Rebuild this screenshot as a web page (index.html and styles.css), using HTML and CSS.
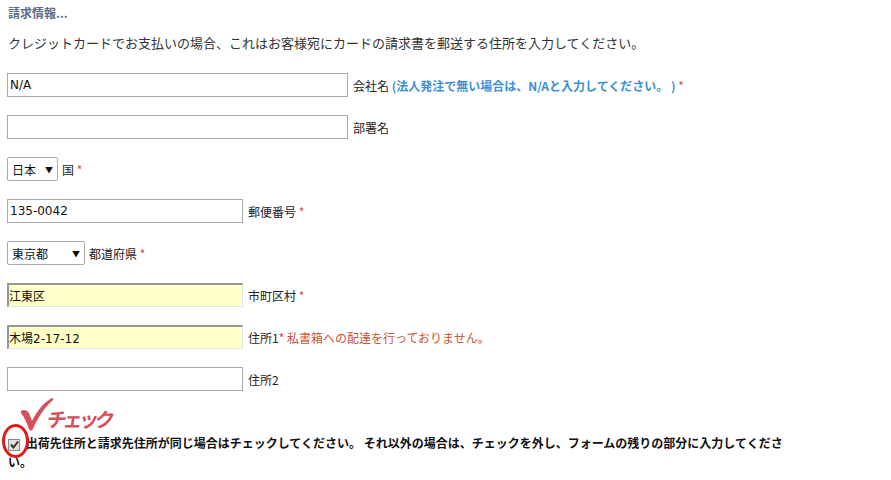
FILE: index.html
```html
<!DOCTYPE html>
<html>

<head>
    <meta charset="utf-8">
    <title>請求情報</title>
    <link rel="stylesheet" href="styles.css">
</head>

<body>

    <div class="page">
        <div class="heading">請求情報...</div>
        <p class="intro">クレジットカードでお支払いの場合、これはお客様宛にカードの請求書を郵送する住所を入力してください。</p>

        <div class="row">
            <input class="text wide" type="text" value="N/A">
            <span class="label">会社名 <span class="note">(法人発注で無い場合は、N/Aと入力してください。 )</span> <span class="req">*</span></span>
        </div>
        <div class="row">
            <input class="text wide" type="text" value="">
            <span class="label">部署名</span>
        </div>
        <div class="row">
            <span class="select country">日本<span class="arrow">▼</span></span>
            <span class="label">国 <span class="req">*</span></span>
        </div>
        <div class="row">
            <input class="text" type="text" value="135-0042">
            <span class="label">郵便番号 <span class="req">*</span></span>
        </div>
        <div class="row">
            <span class="select pref">東京都<span class="arrow">▼</span></span>
            <span class="label">都道府県 <span class="req">*</span></span>
        </div>
        <div class="row">
            <input class="text filled" type="text" value="江東区">
            <span class="label">市町区村 <span class="req">*</span></span>
        </div>
        <div class="row">
            <input class="text filled" type="text" value="木場2-17-12">
            <span class="label">住所1<span class="req">*</span> <span class="warn">私書箱への配達を行っておりません。</span></span>
        </div>
        <div class="row">
            <input class="text" type="text" value="">
            <span class="label">住所2</span>
        </div>

        <div class="mark">
            <svg class="tick" width="36" height="34" viewBox="0 0 36 34">
                <path d="M2 14 C5 12 8 13 10 16 L13 24 C18 14 24 6 33 1 C34 1 35 2 34 3 C26 10 19 20 14 32 C13 34 11 34 10 32 C8 26 5 20 2 16 Z" fill="#d4505a"/>
            </svg>
            <span class="mark-text">チェック</span>
        </div>

        <p class="same">
            <span class="checkbox">
                <svg width="9" height="9" viewBox="0 0 9 9">
                    <path d="M1 4.5 L3.5 7.5 L8 1.5" fill="none" stroke="#333" stroke-width="2"/>
                </svg>
            </span>
            出荷先住所と請求先住所が同じ場合はチェックしてください。 それ以外の場合は、チェックを外し、フォームの残りの部分に入力してください。
            <span class="ring"></span>
        </p>
    </div>

</body>

</html>
```

FILE: styles.css
```css
body {
    margin: 0;
    font-family: "Noto Sans CJK JP", sans-serif;
    color: #222;
    background: #fff;
}

.page {
    position: relative;
    width: 782px;
    padding: 5px 8px 0 8px;
}

.heading {
    font-size: 12px;
    line-height: 16px;
    font-weight: bold;
    color: #5b6d85;
}

.intro {
    margin: 12px 0 20px 0;
    font-size: 13px;
    line-height: 20px;
    color: #333;
}

.row {
    display: flex;
    align-items: center;
    height: 24px;
    margin-bottom: 18px;
    margin-left: -1px;
}

.text {
    box-sizing: border-box;
    width: 236px;
    height: 24px;
    margin: 0 5px 0 0;
    padding: 0 2px;
    border: 1px solid #a9a9a9;
    background: #fff;
    font-family: "DejaVu Sans", "Noto Sans CJK JP", sans-serif;
    font-size: 12px;
    color: #111;
    outline: none;
}

.wide {
    width: 341px;
}

.filled {
    background: #ffffc8;
    border-top: 2px solid #969696;
    border-left: 2px solid #969696;
    border-right: 1px solid #e4e4e4;
    border-bottom: 1px solid #e4e4e4;
    padding-left: 0;
}

.select {
    box-sizing: border-box;
    display: inline-flex;
    align-items: center;
    height: 24px;
    margin-right: 4px;
    padding: 0 4px;
    border: 1px solid #a9a9a9;
    border-radius: 2px;
    font-size: 12px;
    color: #111;
}

.select .arrow {
    font-size: 8px;
    margin-left: auto;
}

.country {
    width: 51px;
}

.pref {
    width: 78px;
}

.label {
    font-size: 12px;
    color: #222;
    white-space: nowrap;
}

.note {
    color: #3d8fd6;
    font-weight: bold;
}

.req {
    color: #e34545;
}

.warn {
    color: #c8552f;
}

.mark {
    display: flex;
    align-items: flex-end;
    height: 36px;
    margin-top: -14px;
    padding-left: 11px;
}

.tick {
    display: block;
}

.mark-text {
    font-size: 20px;
    line-height: 22px;
    font-weight: bold;
    letter-spacing: -4px;
    color: #d4505a;
    transform: skewX(-8deg);
    margin-left: -8px;
    margin-bottom: 1px;
}

.same {
    margin: 2px 0 0 0;
    font-size: 12px;
    line-height: 19px;
    font-weight: bold;
    color: #111;
}

.checkbox {
    display: inline-flex;
    align-items: center;
    justify-content: center;
    box-sizing: border-box;
    width: 12px;
    height: 12px;
    margin-right: 3px;
    vertical-align: -1px;
    border: 1px solid #8a8a8a;
    background: #e2e2e2;
}

.ring {
    position: absolute;
    left: 2px;
    top: 424px;
    width: 21px;
    height: 28px;
    border: 3px solid #e01818;
    border-radius: 50%;
}
```
